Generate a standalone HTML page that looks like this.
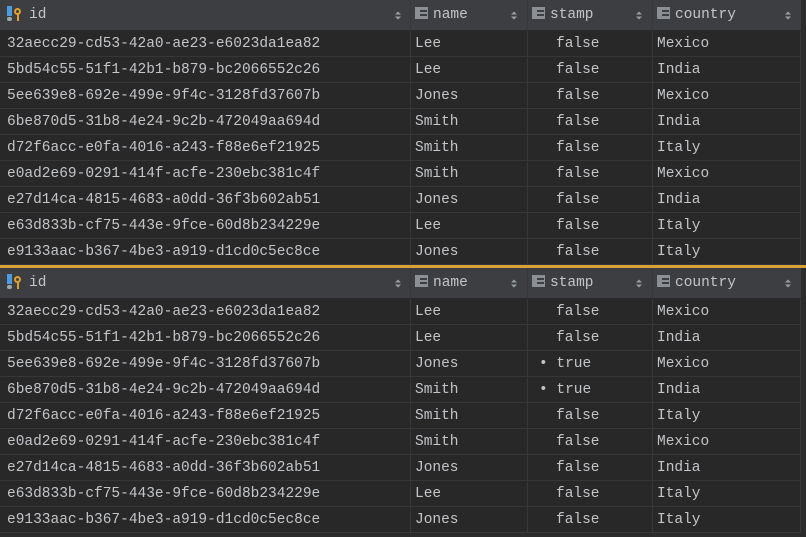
<!DOCTYPE html>
<html><head><style>
body{margin:0;width:806px;height:537px;background:#2b2b2b;overflow:hidden;font-family:"Liberation Mono",monospace;font-size:14.5px;color:#c3c5c9;}
.h{position:absolute;left:0;width:801px;height:30px;background:#3c3e41;border-bottom:1px solid #2a2a2a;}
.r{position:absolute;left:0;width:801px;height:25px;background:#282828;border-bottom:1px solid #363636;}
.c{position:absolute;top:1px;height:100%;line-height:25px;white-space:pre;}
.hc{line-height:30px;top:0;}
.v{position:absolute;top:0;width:1px;height:100%;background:#383838;}
.ic{display:inline-block;width:13px;height:12px;vertical-align:-1px;margin-right:5px;background:linear-gradient(90deg,#8c9095 0 4px,transparent 4px),repeating-linear-gradient(180deg,#8c9095 0 2px,#3c3e41 2px 4px);border:1px solid #8c9095;box-sizing:border-box;}
.s{position:absolute;top:11px;width:6px;height:9px;}
.sep{position:absolute;left:0;top:265px;width:806px;height:3px;background:#d9a13a;}
</style></head><body>
<div id="a"></div>
<div class="sep"></div>
<script>
var rows=[["32aecc29-cd53-42a0-ae23-e6023da1ea82","Lee","Mexico"],["5bd54c55-51f1-42b1-b879-bc2066552c26","Lee","India"],["5ee639e8-692e-499e-9f4c-3128fd37607b","Jones","Mexico"],["6be870d5-31b8-4e24-9c2b-472049aa694d","Smith","India"],["d72f6acc-e0fa-4016-a243-f88e6ef21925","Smith","Italy"],["e0ad2e69-0291-414f-acfe-230ebc381c4f","Smith","Mexico"],["e27d14ca-4815-4683-a0dd-36f3b602ab51","Jones","India"],["e63d833b-cf75-443e-9fce-60d8b234229e","Lee","Italy"],["e9133aac-b367-4be3-a919-d1cd0c5ec8ce","Jones","Italy"]];
var h="";
function so(x){return '<svg class="s" style="left:'+x+'px" viewBox="0 0 6 9"><path d="M0 3.5L3 0.5L6 3.5Z M0 5.5L3 8.5L6 5.5Z" fill="#9a9ea3"/></svg>';}
function tbl(top,tr){
 h+='<div class="h" style="top:'+top+'px"><span class="c hc" style="left:7px"><span style="display:inline-block;width:18px;height:14px;vertical-align:-2px;margin-right:4px;position:relative"><span style="position:absolute;left:0;top:0;width:5px;height:10px;background:#4d9be0"></span><span style="position:absolute;left:0;top:11px;width:5px;height:4px;border-radius:2px;background:#9aa"></span><span style="position:absolute;left:7px;top:2px;width:7px;height:7px;border:2px solid #e0a030;border-radius:50%;box-sizing:border-box"></span><span style="position:absolute;left:10px;top:8px;width:2px;height:7px;background:#e0a030"></span></span>id</span>'+
 '<span class="c hc" style="left:415px"><span class="ic"></span>name</span><span class="c hc" style="left:532px"><span class="ic"></span>stamp</span><span class="c hc" style="left:657px"><span class="ic"></span>country</span>'+
 so(395)+so(511)+so(636)+so(785)+
 '<div class="v" style="left:410px"></div><div class="v" style="left:527px"></div><div class="v" style="left:652px"></div></div>';
 for(var i=0;i<9;i++){var y=top+31+i*26;var r=rows[i];var st=(tr&&(i==2||i==3))?'<span style="left:539px" class="c">• true</span>':'<span style="left:556px" class="c">false</span>';
 h+='<div class="r" style="top:'+y+'px"><span class="c" style="left:7px">'+r[0]+'</span><span class="c" style="left:415px">'+r[1]+'</span>'+st+'<span class="c" style="left:657px">'+r[2]+'</span><div class="v" style="left:410px"></div><div class="v" style="left:527px"></div><div class="v" style="left:652px"></div><div class="v" style="left:800px"></div></div>';}
}
tbl(0,false);tbl(268,true);
document.getElementById("a").innerHTML=h;
</script>
</body></html>
